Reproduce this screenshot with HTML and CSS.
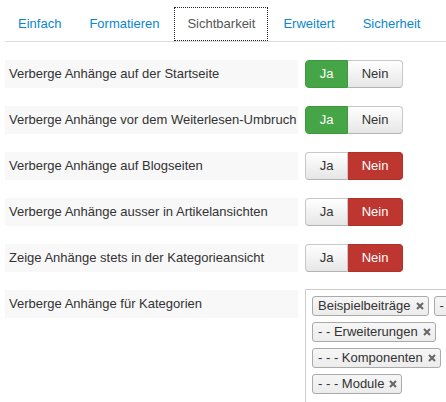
FILE: index.html
```html
<!DOCTYPE html>
<html lang="de">
<head>
<meta charset="utf-8">
<title>Sichtbarkeit</title>
<link rel="stylesheet" href="styles.css">
</head>
<body>
<ul class="tabs">
  <li><a class="tab">Einfach</a></li>
  <li><a class="tab">Formatieren</a></li>
  <li><a class="tab active">Sichtbarkeit</a></li>
  <li><a class="tab">Erweitert</a></li>
  <li><a class="tab">Sicherheit</a></li>
</ul>

<div class="form">
  <div class="group">
    <div class="label">Verberge Anhänge auf der Startseite</div>
    <div class="btns"><span class="btn ja yes">Ja</span><span class="btn nein">Nein</span></div>
  </div>
  <div class="group">
    <div class="label">Verberge Anhänge vor dem Weiterlesen-Umbruch</div>
    <div class="btns"><span class="btn ja yes">Ja</span><span class="btn nein">Nein</span></div>
  </div>
  <div class="group">
    <div class="label">Verberge Anhänge auf Blogseiten</div>
    <div class="btns"><span class="btn ja">Ja</span><span class="btn nein no">Nein</span></div>
  </div>
  <div class="group">
    <div class="label">Verberge Anhänge ausser in Artikelansichten</div>
    <div class="btns"><span class="btn ja">Ja</span><span class="btn nein no">Nein</span></div>
  </div>
  <div class="group">
    <div class="label">Zeige Anhänge stets in der Kategorieansicht</div>
    <div class="btns"><span class="btn ja">Ja</span><span class="btn nein no">Nein</span></div>
  </div>
  <div class="group">
    <div class="label">Verberge Anhänge für Kategorien</div>
    <ul class="choices">
      <li class="choice">Beispielbeiträge<svg class="x" viewBox="0 0 8 8"><path d="M1 1L7 7M7 1L1 7"/></svg></li>
      <li class="choice">- Joomla!<svg class="x" viewBox="0 0 8 8"><path d="M1 1L7 7M7 1L1 7"/></svg></li>
      <li class="choice">- - Erweiterungen<svg class="x" viewBox="0 0 8 8"><path d="M1 1L7 7M7 1L1 7"/></svg></li>
      <li class="choice">- - - Komponenten<svg class="x" viewBox="0 0 8 8"><path d="M1 1L7 7M7 1L1 7"/></svg></li>
      <li class="choice">- - - Module<svg class="x" viewBox="0 0 8 8"><path d="M1 1L7 7M7 1L1 7"/></svg></li>
    </ul>
  </div>
</div>
</body>
</html>
```

FILE: styles.css
```css
html, body {
  overflow: hidden;
}
body {
  margin: 0;
  font-family: "Liberation Sans", Arial, sans-serif;
  font-size: 13px;
  line-height: 18px;
  color: #333;
  background: #fff;
}
.tabs {
  list-style: none;
  margin: 7px 0 0 5px;
  padding: 0;
  display: flex;
  border-bottom: 1px solid #ddd;
}
.tab {
  display: block;
  padding: 7px 12px;
  margin-right: 2px;
  border: 1px solid transparent;
  color: #0a87d1;
  cursor: pointer;
}
.tab.active {
  border: 1px dotted #222;
  color: #555;
}
.form {
  margin-top: 18px;
  padding-left: 5px;
}
.group {
  display: flex;
  align-items: flex-start;
  gap: 7px;
  margin-bottom: 18px;
}
.label {
  flex-shrink: 0;
  width: 285px;
  padding: 5px 4px;
  background: #f8f8f8;
  white-space: nowrap;
}
.btns {
  display: flex;
  flex-shrink: 0;
}
.btn {
  box-sizing: border-box;
  height: 28px;
  padding: 4px 0;
  text-align: center;
  border: 1px solid #c8c8c8;
  border-bottom-color: #b3b3b3;
  background: linear-gradient(#ffffff, #e6e6e6);
  color: #333;
}
.ja {
  width: 43px;
  border-radius: 4px 0 0 4px;
}
.nein {
  width: 55px;
  border-left: 0;
  border-radius: 0 4px 4px 0;
}
.btn.yes {
  background: #46a546;
  border-color: #3c9a3c;
  color: #fff;
}
.btn.no {
  background: #bd362f;
  border-color: #b0302a;
  color: #fff;
}
.choices {
  list-style: none;
  margin: -1px 0 0 0;
  padding: 3px 0 0 1px;
  width: 216px;
  border: 1px solid #ccc;
  display: flex;
  flex-wrap: wrap;
  align-content: flex-start;
  flex-shrink: 0;
  height: 420px;
}
.choice {
  display: inline-flex;
  align-items: center;
  gap: 5px;
  margin: 3px 0 3px 5px;
  padding: 2px 4px 2px 5px;
  line-height: 14px;
  border: 1px solid #aaa;
  border-radius: 3px;
  background: linear-gradient(#f6f6f6, #ececec);
  color: #333;
  white-space: nowrap;
}
.x {
  width: 8px;
  height: 8px;
  stroke: #666;
  stroke-width: 2;
  fill: none;
}
```
